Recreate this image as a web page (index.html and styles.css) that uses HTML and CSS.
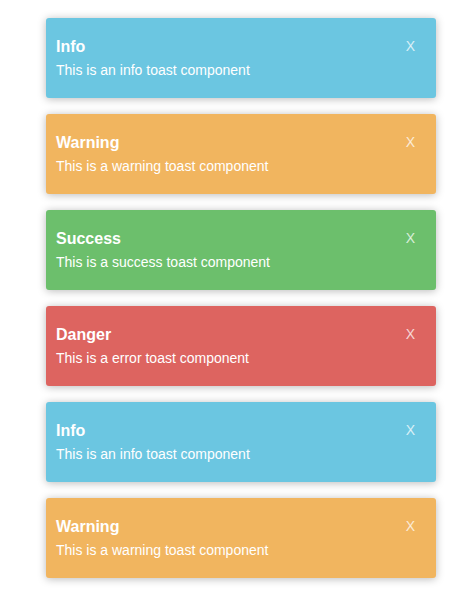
FILE: index.html
```html
<!DOCTYPE html>
<html>
<head>
<meta charset="utf-8">
<link rel="stylesheet" href="styles.css">
</head>
<body>
<div class="stack">
  <div class="toast info"><div class="body"><div class="title">Info</div><div class="msg">This is an info toast component</div></div><span class="close">X</span></div>
  <div class="toast warning"><div class="body"><div class="title">Warning</div><div class="msg">This is a warning toast component</div></div><span class="close">X</span></div>
  <div class="toast success"><div class="body"><div class="title">Success</div><div class="msg">This is a success toast component</div></div><span class="close">X</span></div>
  <div class="toast danger"><div class="body"><div class="title">Danger</div><div class="msg">This is a error toast component</div></div><span class="close">X</span></div>
  <div class="toast info"><div class="body"><div class="title">Info</div><div class="msg">This is an info toast component</div></div><span class="close">X</span></div>
  <div class="toast warning"><div class="body"><div class="title">Warning</div><div class="msg">This is a warning toast component</div></div><span class="close">X</span></div>
</div>
</body>
</html>
```
FILE: styles.css
```css
html, body { margin: 0; padding: 0; background: #fff; }
body { font-family: "Liberation Sans", Arial, sans-serif; color: #fff; }
.stack {
  display: flex;
  flex-direction: column;
  gap: 16px;
  padding: 18px 0 19px 46px;
  width: 390px;
}
.toast {
  height: 80px;
  box-sizing: border-box;
  border-radius: 3px;
  display: flex;
  justify-content: space-between;
  align-items: flex-start;
  padding: 20px 21px 0 10px;
  box-shadow: 0 1px 8px rgba(0,0,0,0.28);
}
.info { background: #6bc6e1; }
.warning { background: #f1b55f; }
.success { background: #6cbf6c; }
.danger { background: #dd6460; }
.title { font-size: 16px; font-weight: bold; line-height: 18px; }
.msg { font-size: 14px; line-height: 16px; margin-top: 6px; }
.close { font-size: 14px; line-height: 18px; margin-top: -1px; color: rgba(255,255,255,0.75); }
```
